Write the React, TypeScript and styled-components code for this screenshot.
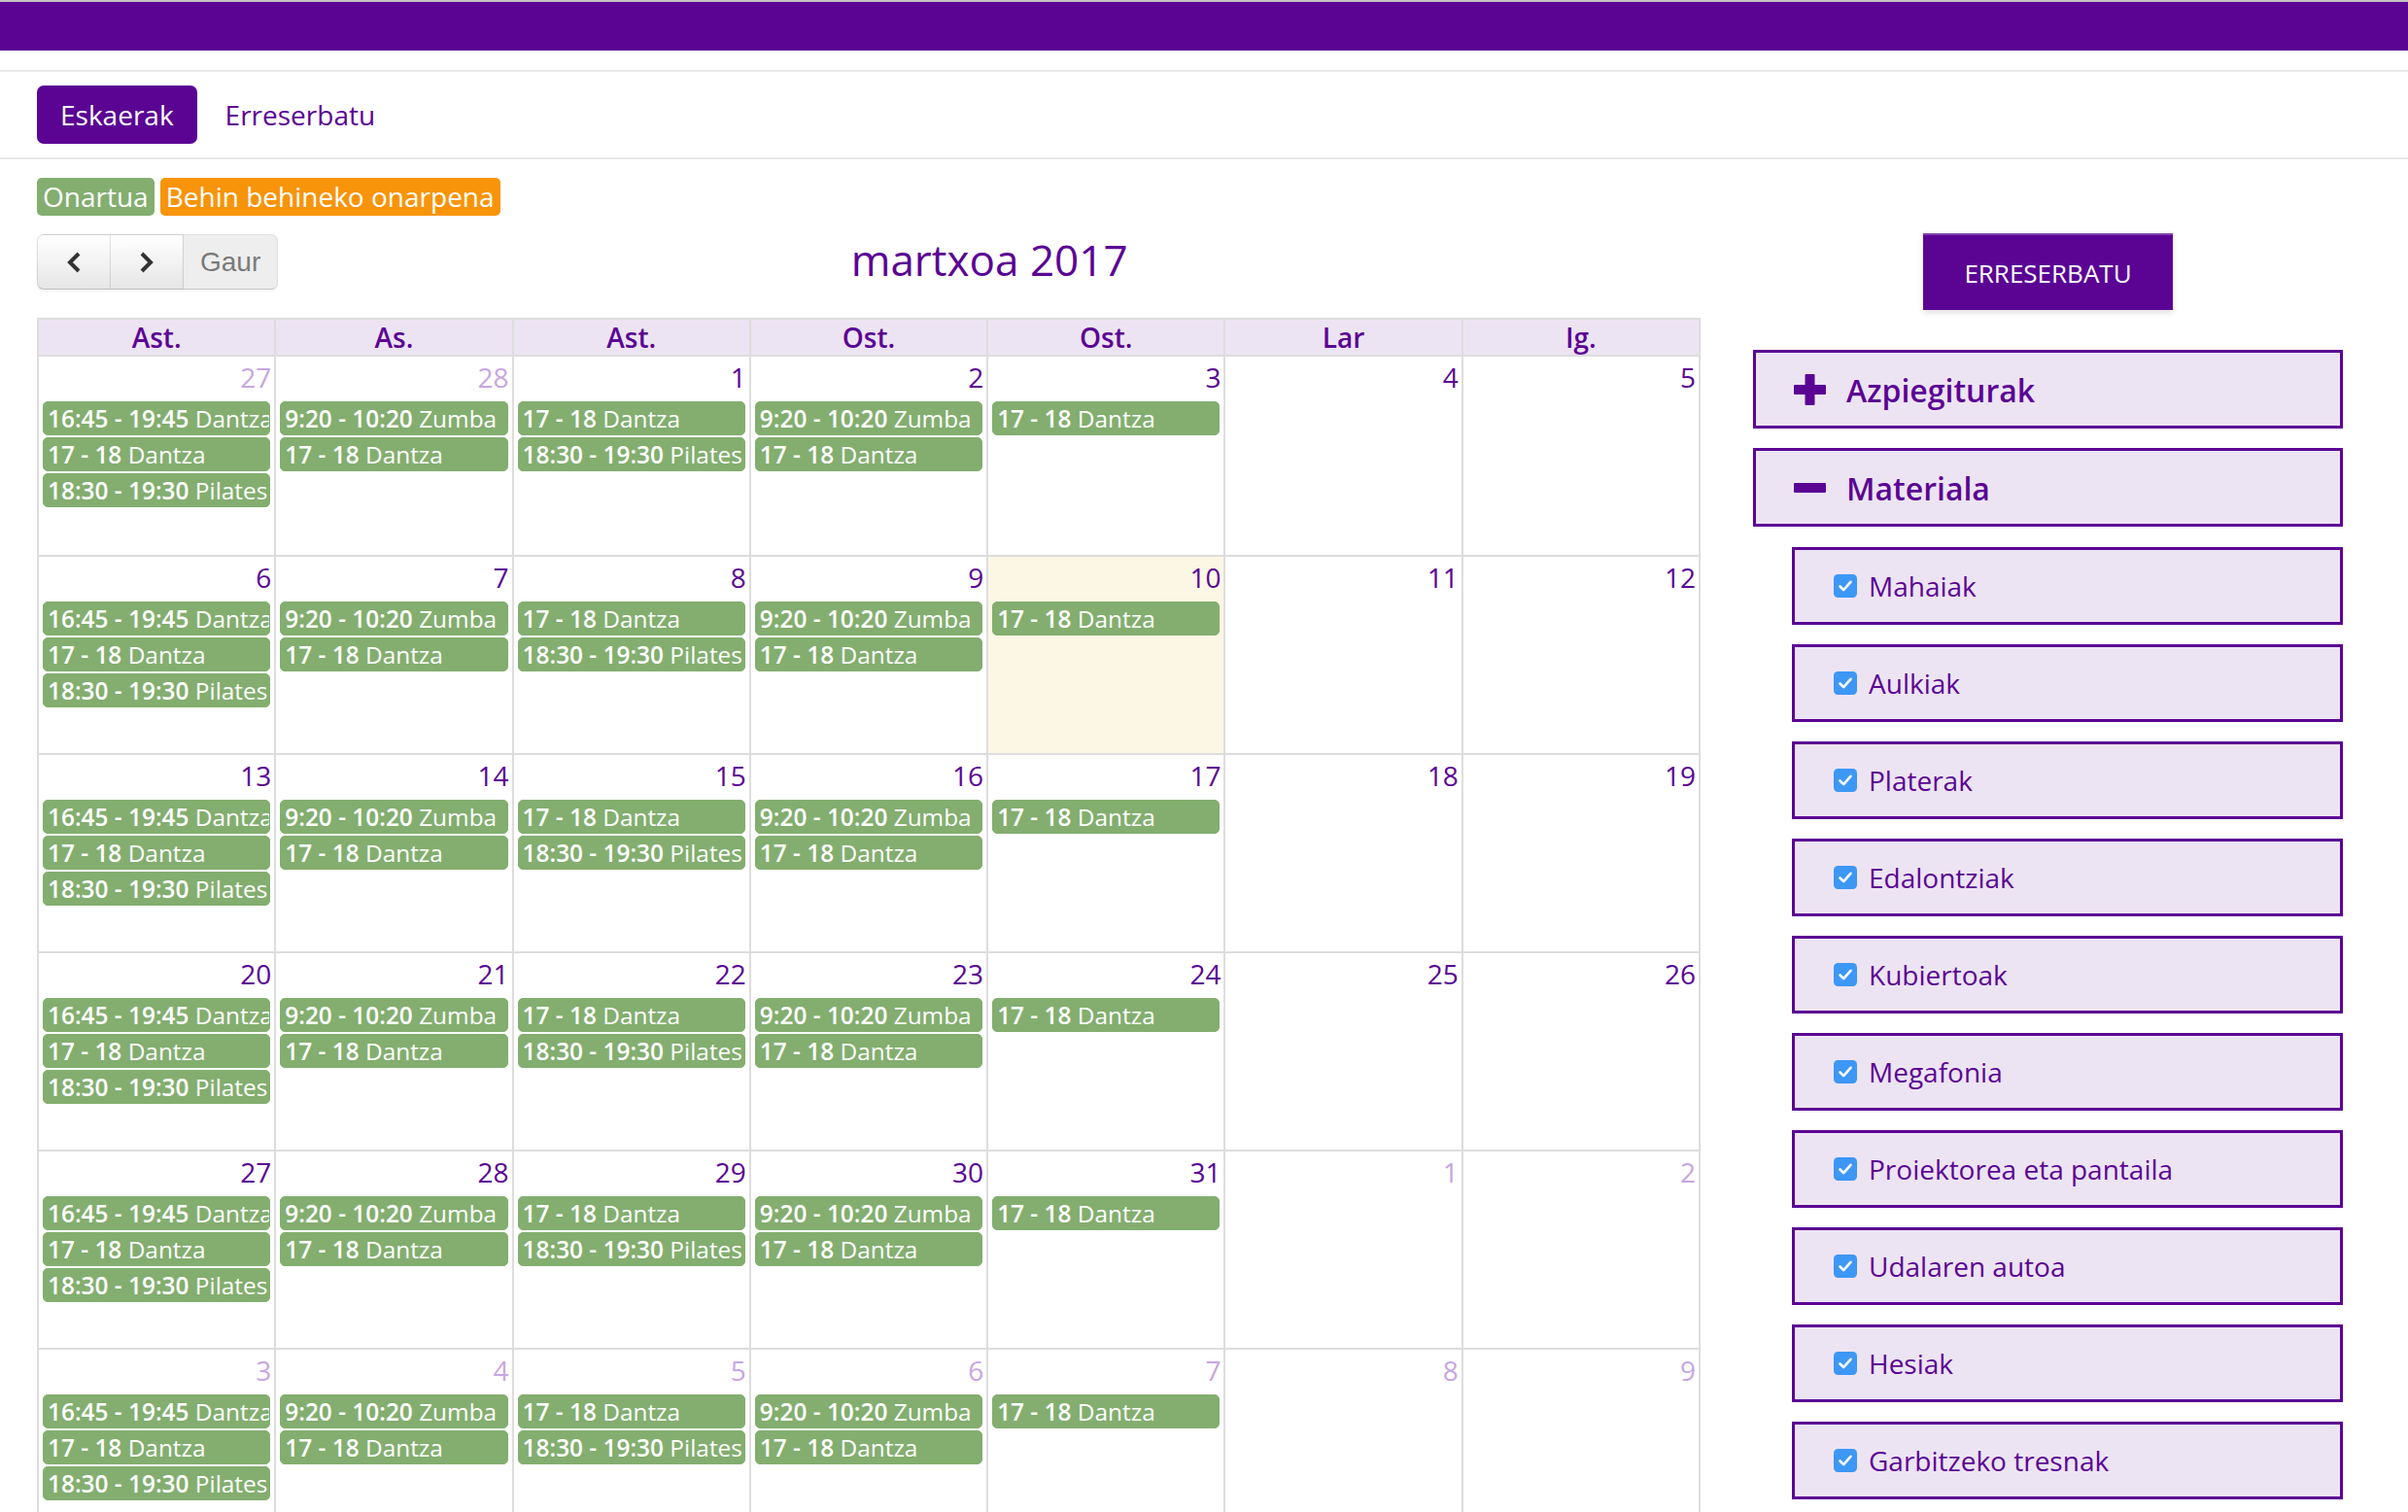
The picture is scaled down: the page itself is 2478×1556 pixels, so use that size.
import React from "react";
import styled, { createGlobalStyle } from "styled-components";

const PURPLE = "#5b0494";
const LILAC = "#ede4f3";
const GREEN = "#83ae6f";
const ORANGE = "#f8940a";
const GRID = "#dddddd";

const Global = createGlobalStyle`
  *, *::before, *::after { box-sizing: border-box; }
  html, body { margin: 0; padding: 0; overflow: hidden; background: #fff; }
  body { font-family: "Open Sans", "Liberation Sans", sans-serif; color: ${PURPLE}; }
`;

const Page = styled.div`
  width: 2478px;
  min-height: 1556px;
`;

const TopBar = styled.header`
  height: 52px;
  background: ${PURPLE};
  border-top: 2px solid #c4c4c4;
`;

const Tabs = styled.nav`
  margin-top: 20px;
  border-top: 2px solid #e8e8e8;
  border-bottom: 2px solid #e8e8e8;
  padding: 14px 38px;
  display: flex;
  gap: 5px;
`;

const Tab = styled.a<{ $active?: boolean }>`
  height: 60px;
  line-height: 60px;
  padding: 0 24px;
  font-size: 28px;
  border-radius: 7px;
  text-decoration: none;
  background: ${(p) => (p.$active ? PURPLE : "transparent")};
  color: ${(p) => (p.$active ? "#fff" : PURPLE)};
`;

const Legend = styled.div`
  display: flex;
  gap: 6px;
  padding: 19px 38px 0;
`;

const Badge = styled.span<{ $bg: string }>`
  height: 39px;
  line-height: 39px;
  padding: 0 6px;
  font-size: 28px;
  border-radius: 5px;
  color: #fff;
  background: ${(p) => p.$bg};
`;

const Main = styled.div`
  display: grid;
  grid-template-columns: 1fr 607px;
  column-gap: 54px;
  padding: 18px 67px 0 38px;
  align-items: start;
`;

const CalendarColumn = styled.section`
  min-width: 0;
`;

const Toolbar = styled.div`
  display: flex;
  align-items: flex-start;
  height: 58px;
  padding-top: 1px;
`;

const ButtonGroup = styled.div`
  display: flex;
`;

const ArrowButton = styled.button<{ $first?: boolean }>`
  width: 76px;
  height: 57px;
  display: flex;
  align-items: center;
  justify-content: center;
  padding: 0;
  margin-left: ${(p) => (p.$first ? "0" : "-1px")};
  background: linear-gradient(#ffffff, #e6e6e6);
  border: 1px solid;
  border-color: rgba(0, 0, 0, 0.1) rgba(0, 0, 0, 0.1) rgba(0, 0, 0, 0.25);
  border-radius: ${(p) => (p.$first ? "7px 0 0 7px" : "0")};
  box-shadow: inset 0 2px 0 rgba(255, 255, 255, 0.2), 0 2px 3px rgba(0, 0, 0, 0.05);
  color: #333;
`;

const TodayButton = styled.button`
  height: 57px;
  padding: 0 17px;
  margin-left: -1px;
  font-family: "Liberation Sans", Arial, sans-serif;
  font-size: 28px;
  color: #333;
  background: #e6e6e6;
  opacity: 0.65;
  border: 1px solid;
  border-color: rgba(0, 0, 0, 0.1) rgba(0, 0, 0, 0.1) rgba(0, 0, 0, 0.25);
  border-radius: 0 7px 7px 0;
  box-shadow: 0 2px 3px rgba(0, 0, 0, 0.05);
`;

const Title = styled.h2`
  flex: 1;
  margin: 8px 0 0;
  text-align: center;
  font-size: 44px;
  line-height: 36px;
  font-weight: 400;
  color: ${PURPLE};
`;

const Calendar = styled.div`
  margin-top: 29px;
  border-top: 2px solid ${GRID};
  border-left: 2px solid ${GRID};
`;

const Row = styled.div`
  display: grid;
  grid-template-columns: repeat(7, minmax(0, 1fr));
`;

const HeadCell = styled.div`
  height: 38px;
  line-height: 36px;
  background: ${LILAC};
  border-right: 2px solid ${GRID};
  border-bottom: 2px solid ${GRID};
  text-align: center;
  font-size: 28px;
  font-weight: 600;
  color: ${PURPLE};
`;

const DayCell = styled.div<{ $today?: boolean; $tall?: boolean }>`
  height: ${(p) => (p.$tall ? "206px" : "204px")};
  min-width: 0;
  overflow: hidden;
  border-right: 2px solid ${GRID};
  border-bottom: 2px solid ${GRID};
  background: ${(p) => (p.$today ? "#fcf7e4" : "#fff")};
`;

const DayNumber = styled.div<{ $other?: boolean }>`
  height: 44px;
  padding: 1px 3px 0 0;
  text-align: right;
  font-size: 28px;
  line-height: 40px;
  color: ${(p) => (p.$other ? "#c7a6e1" : PURPLE)};
`;

const EventList = styled.div`
  display: flex;
  flex-direction: column;
  gap: 2px;
  padding: 2px 4px 0 4px;
`;

const Event = styled.div`
  height: 35px;
  line-height: 33px;
  padding: 0 4px;
  background: ${GREEN};
  border: 1px solid ${GREEN};
  border-radius: 5px;
  color: #fff;
  font-size: 24.4px;
  white-space: nowrap;
  overflow: hidden;
`;

const EventTime = styled.span`
  font-weight: 600;
`;

const Sidebar = styled.aside`
  display: flex;
  flex-direction: column;
`;

const ReserveButton = styled.button`
  align-self: center;
  width: 257px;
  height: 79px;
  background: ${PURPLE};
  border: none;
  border-top: 2px solid #7f46ae;
  color: #fff;
  font-family: "Open Sans", sans-serif;
  font-size: 26px;
  text-transform: uppercase;
  box-shadow: 0 3px 6px rgba(0, 0, 0, 0.12);
`;

const Panel = styled.div<{ $first?: boolean }>`
  margin-top: ${(p) => (p.$first ? "41px" : "20px")};
  height: 81px;
  display: flex;
  align-items: center;
  gap: 21px;
  padding: 2px 0 0 39px;
  border: 3px solid ${PURPLE};
  background: ${LILAC};
  font-size: 32px;
  font-weight: 600;
  color: ${PURPLE};
`;

const PanelIcon = styled.span`
  display: flex;
  margin-top: -2px;
`;

const ItemList = styled.div`
  display: flex;
  flex-direction: column;
  gap: 20px;
  margin: 21px 0 0 40px;
`;

const Item = styled.label`
  height: 80px;
  display: flex;
  align-items: center;
  gap: 12px;
  padding-left: 40px;
  border: 3px solid ${PURPLE};
  background: ${LILAC};
  font-size: 28px;
  color: ${PURPLE};
`;

const ChevronLeft = () => (
  <svg width="18" height="22" viewBox="0 0 18 22">
    <path d="M14 2 L5 11 L14 20" fill="none" stroke="#333" strokeWidth="4" />
  </svg>
);

const ChevronRight = () => (
  <svg width="18" height="22" viewBox="0 0 18 22">
    <path d="M4 2 L13 11 L4 20" fill="none" stroke="#333" strokeWidth="4" />
  </svg>
);

const PlusIcon = () => (
  <svg width="33" height="32" viewBox="0 0 33 32">
    <rect x="0" y="11" width="33" height="10" rx="1" fill={PURPLE} />
    <rect x="11.5" y="0" width="10" height="32" rx="1" fill={PURPLE} />
  </svg>
);

const MinusIcon = () => (
  <svg width="33" height="10" viewBox="0 0 33 10">
    <rect x="0" y="0" width="33" height="10" rx="1" fill={PURPLE} />
  </svg>
);

const CheckIcon = () => (
  <svg width="24" height="24" viewBox="0 0 24 24">
    <rect x="0" y="0" width="24" height="24" rx="4.5" fill="#3d97f5" />
    <path d="M6.5 12.5 L10.2 16.2 L17.5 7.8" fill="none" stroke="#fff" strokeWidth="2.6" strokeLinecap="round" strokeLinejoin="round" />
  </svg>
);

type Ev = [string, string];
const dayEvents: Ev[][] = [
  [["16:45 - 19:45", "Dantza"], ["17 - 18", "Dantza"], ["18:30 - 19:30", "Pilates"]],
  [["9:20 - 10:20", "Zumba"], ["17 - 18", "Dantza"]],
  [["17 - 18", "Dantza"], ["18:30 - 19:30", "Pilates"]],
  [["9:20 - 10:20", "Zumba"], ["17 - 18", "Dantza"]],
  [["17 - 18", "Dantza"]],
  [],
  [],
];

type Day = { d: number; other?: boolean };
const weeks: Day[][] = [
  [{ d: 27, other: true }, { d: 28, other: true }, { d: 1 }, { d: 2 }, { d: 3 }, { d: 4 }, { d: 5 }],
  [6, 7, 8, 9, 10, 11, 12].map((d) => ({ d })),
  [13, 14, 15, 16, 17, 18, 19].map((d) => ({ d })),
  [20, 21, 22, 23, 24, 25, 26].map((d) => ({ d })),
  [{ d: 27 }, { d: 28 }, { d: 29 }, { d: 30 }, { d: 31 }, { d: 1, other: true }, { d: 2, other: true }],
  [3, 4, 5, 6, 7, 8, 9].map((d) => ({ d, other: true })),
];

const dayNames = ["Ast.", "As.", "Ast.", "Ost.", "Ost.", "Lar", "Ig."];

const materials = [
  "Mahaiak",
  "Aulkiak",
  "Platerak",
  "Edalontziak",
  "Kubiertoak",
  "Megafonia",
  "Proiektorea eta pantaila",
  "Udalaren autoa",
  "Hesiak",
  "Garbitzeko tresnak",
];

export default function App() {
  return (
    <Page>
      <Global />
      <TopBar />
      <Tabs>
        <Tab $active>Eskaerak</Tab>
        <Tab>Erreserbatu</Tab>
      </Tabs>
      <Legend>
        <Badge $bg={GREEN}>Onartua</Badge>
        <Badge $bg={ORANGE}>Behin behineko onarpena</Badge>
      </Legend>
      <Main>
        <CalendarColumn>
          <Toolbar>
            <ButtonGroup>
              <ArrowButton $first aria-label="prev">
                <ChevronLeft />
              </ArrowButton>
              <ArrowButton aria-label="next">
                <ChevronRight />
              </ArrowButton>
              <TodayButton disabled>Gaur</TodayButton>
            </ButtonGroup>
            <Title>martxoa 2017</Title>
          </Toolbar>
          <Calendar>
            <Row>
              {dayNames.map((n, i) => (
                <HeadCell key={i}>{n}</HeadCell>
              ))}
            </Row>
            {weeks.map((week, wi) => (
              <Row key={wi}>
                {week.map((day, di) => (
                  <DayCell key={di} $tall={wi === 0} $today={wi === 1 && di === 4}>
                    <DayNumber $other={day.other}>{day.d}</DayNumber>
                    <EventList>
                      {dayEvents[di].map(([time, title], ei) => (
                        <Event key={ei}>
                          <EventTime>{time}</EventTime> {title}
                        </Event>
                      ))}
                    </EventList>
                  </DayCell>
                ))}
              </Row>
            ))}
          </Calendar>
        </CalendarColumn>
        <Sidebar>
          <ReserveButton>Erreserbatu</ReserveButton>
          <Panel $first>
            <PanelIcon>
              <PlusIcon />
            </PanelIcon>
            <span>Azpiegiturak</span>
          </Panel>
          <Panel>
            <PanelIcon>
              <MinusIcon />
            </PanelIcon>
            <span>Materiala</span>
          </Panel>
          <ItemList>
            {materials.map((m) => (
              <Item key={m}>
                <CheckIcon />
                <span>{m}</span>
              </Item>
            ))}
          </ItemList>
        </Sidebar>
      </Main>
    </Page>
  );
}
